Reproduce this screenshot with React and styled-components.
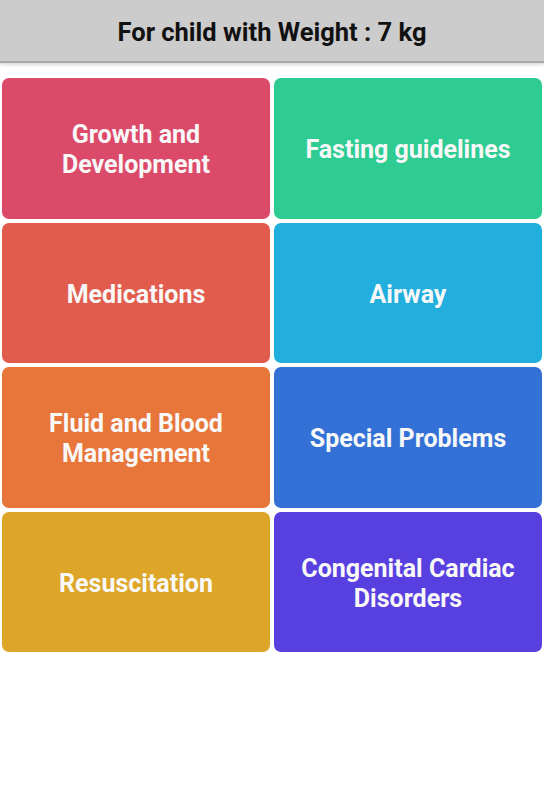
import React from 'react'
import styled, { createGlobalStyle } from 'styled-components'

const tiles = [
  { label: 'Growth and\nDevelopment', color: '#dc4a6a' },
  { label: 'Fasting guidelines', color: '#2ecc92' },
  { label: 'Medications', color: '#e25c4d' },
  { label: 'Airway', color: '#22afdd' },
  { label: 'Fluid and Blood\nManagement', color: '#e8763a' },
  { label: 'Special Problems', color: '#3371d6' },
  { label: 'Resuscitation', color: '#dea628' },
  { label: 'Congenital Cardiac\nDisorders', color: '#5840e0' }
]

const App = () => (
  <Page>
    <GlobalStyle />
    <Header>For child with Weight : 7 kg</Header>
    <Grid>
      {tiles.map((tile) => (
        <Tile key={tile.label} color={tile.color}>
          {tile.label}
        </Tile>
      ))}
    </Grid>
  </Page>
)

export default App

const GlobalStyle = createGlobalStyle`
  body {
    margin: 0;
    background: #fff;
    font-family: Roboto, "Liberation Sans", sans-serif;
  }
`

const Page = styled.div`
  width: 544px;
  min-height: 800px;
  display: flex;
  flex-direction: column;
`

const Header = styled.div`
  height: 63px;
  padding-top: 3px;
  box-sizing: border-box;
  background: #cccccc;
  border-bottom: 2px solid #a9a9a9;
  box-shadow: 0 2px 3px rgba(0, 0, 0, 0.15);
  display: flex;
  align-items: center;
  justify-content: center;
  font-size: 25.5px;
  font-weight: 700;
  color: #111;
`

const Grid = styled.div`
  display: grid;
  grid-template-columns: 1fr 1fr;
  grid-auto-rows: 140.5px;
  gap: 4px 4px;
  padding: 15px 2px 0;
`

const Tile = styled.div`
  box-sizing: border-box;
  padding-top: 4px;
  background: ${(p) => p.color};
  border-radius: 7px;
  display: flex;
  align-items: center;
  justify-content: center;
  text-align: center;
  white-space: pre-line;
  color: #f8f8f8;
  font-size: 25px;
  font-weight: 700;
  line-height: 30px;
`
